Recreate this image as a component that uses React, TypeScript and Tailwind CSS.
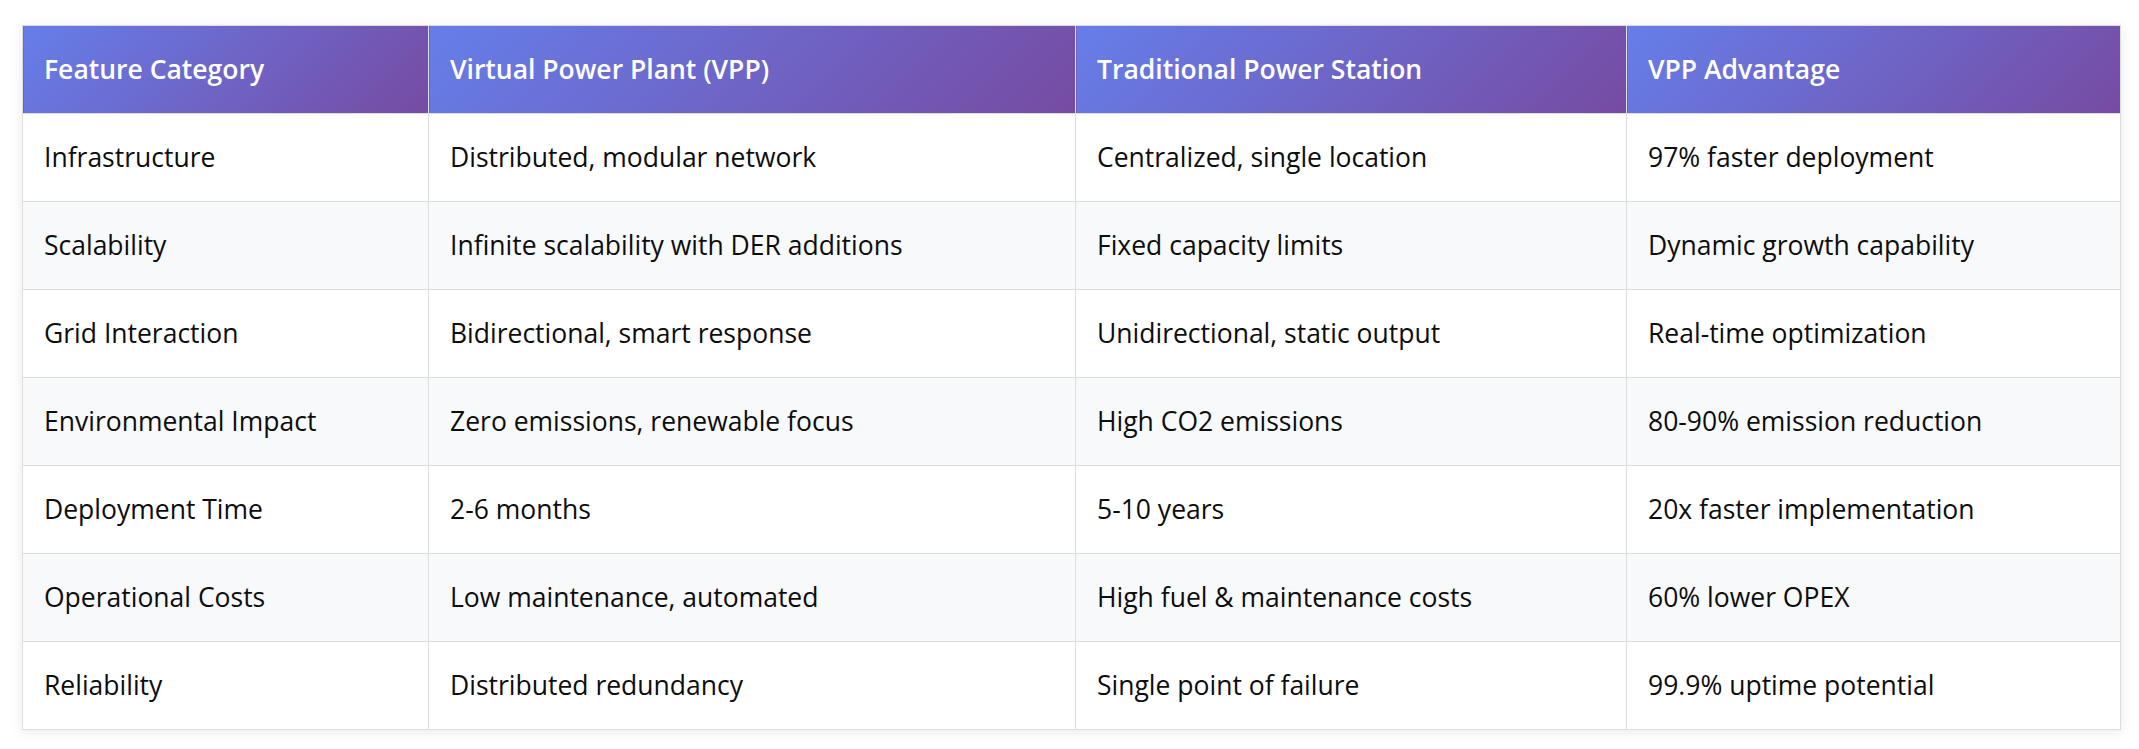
import React from "react";

const rows: [string, string, string, string][] = [
  ["Infrastructure", "Distributed, modular network", "Centralized, single location", "97% faster deployment"],
  ["Scalability", "Infinite scalability with DER additions", "Fixed capacity limits", "Dynamic growth capability"],
  ["Grid Interaction", "Bidirectional, smart response", "Unidirectional, static output", "Real-time optimization"],
  ["Environmental Impact", "Zero emissions, renewable focus", "High CO2 emissions", "80-90% emission reduction"],
  ["Deployment Time", "2-6 months", "5-10 years", "20x faster implementation"],
  ["Operational Costs", "Low maintenance, automated", "High fuel & maintenance costs", "60% lower OPEX"],
  ["Reliability", "Distributed redundancy", "Single point of failure", "99.9% uptime potential"],
];

const headers = ["Feature Category", "Virtual Power Plant (VPP)", "Traditional Power Station", "VPP Advantage"];

export default function App() {
  return (
    <div className="min-h-[749px] bg-white pl-[22px] pt-[25px] font-['Open_Sans',sans-serif]">
      <table className="w-[2098px] table-fixed border-collapse bg-white text-[26.5px] text-[#0d0d0d] shadow-[0_2px_12px_rgba(0,0,0,0.09)]">
        <colgroup>
          <col className="w-[406px]" />
          <col className="w-[647px]" />
          <col className="w-[551px]" />
          <col className="w-[494px]" />
        </colgroup>
        <thead>
          <tr className="h-[88px]">
            {headers.map((h) => (
              <th
                key={h}
                className="border border-[#ddd] bg-[linear-gradient(135deg,#667eea_0%,#764ba2_100%)] px-[21px] text-left align-middle font-semibold text-white"
              >
                {h}
              </th>
            ))}
          </tr>
        </thead>
        <tbody>
          {rows.map((r, i) => (
            <tr key={r[0]} className={`h-[88px] ${i % 2 === 1 ? "bg-[#f8f9fa]" : "bg-white"}`}>
              {r.map((c, j) => (
                <td key={j} className="border border-[#ddd] px-[21px] text-left align-middle font-normal">
                  {c}
                </td>
              ))}
            </tr>
          ))}
        </tbody>
      </table>
    </div>
  );
}
